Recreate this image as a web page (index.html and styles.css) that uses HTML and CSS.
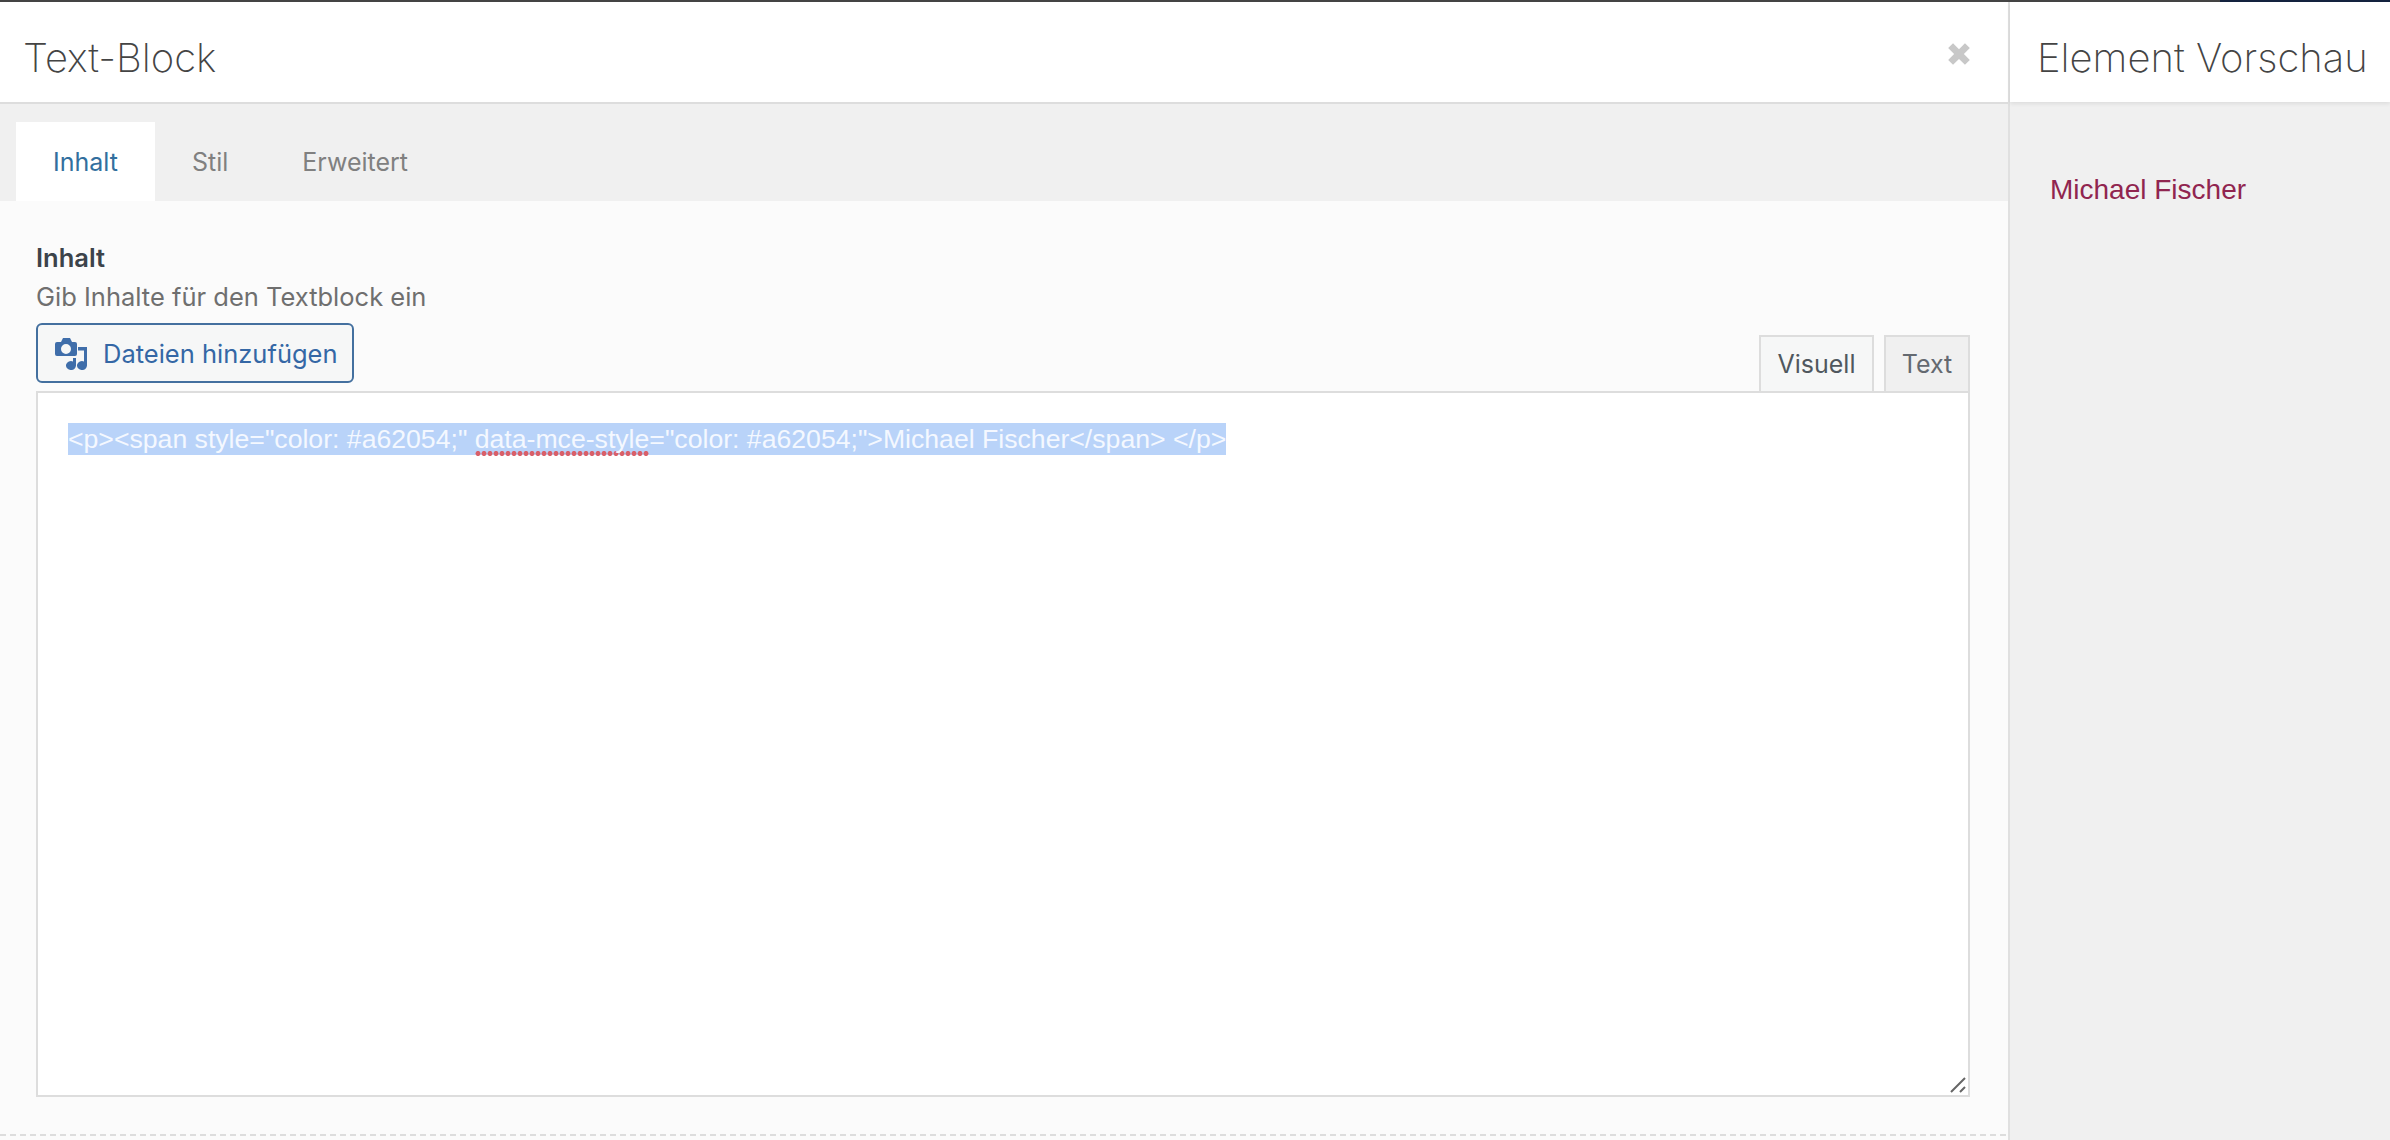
FILE: index.html
```html
<!DOCTYPE html>
<html lang="de">
<head>
<meta charset="utf-8">
<title>Text-Block</title>
<link rel="stylesheet" href="styles.css">
</head>
<body>
<div class="topbar"><div class="topbar-peek"></div></div>
<div class="layout">
  <main class="main">
    <header class="header">
      <h1 class="title">Text-Block</h1>
      <svg class="close" viewBox="0 0 24 24" aria-hidden="true"><path d="M2 6.500 6.500 2 12 7.500 17.500 2 22 6.500 16.500 12 22 17.500 17.500 22 12 16.500 6.500 22 2 17.500 7.500 12Z"/></svg>
    </header>
    <nav class="tabs">
      <a class="tab tab-active">Inhalt</a>
      <a class="tab">Stil</a>
      <a class="tab">Erweitert</a>
    </nav>
    <section class="panel">
      <div class="field-title">Inhalt</div>
      <div class="field-desc">Gib Inhalte für den Textblock ein</div>
      <div class="toolbar">
        <button class="media-btn">
          <svg class="media-icon" viewBox="0 0 34 34" aria-hidden="true">
            <path fill-rule="evenodd" d="M2 6H6L8 2H15L17 6H20Q22 6 22 8V18Q22 20 20 20H2Q0 20 0 18V8Q0 6 2 6ZM11 8A5 5 0 1 0 11 18A5 5 0 1 0 11 8Z"/>
            <path d="M23 11H32V29.500A5 4.500 0 1 1 29 25.400V14.500H23ZM21 22V29.500A5 4.500 0 1 1 18 25.400V22Z"/>
          </svg>
          Dateien hinzufügen
        </button>
        <div class="mode-tabs">
          <span class="mode mode-active">Visuell</span>
          <span class="mode">Text</span>
        </div>
      </div>
      <div class="editor">
        <p class="code"><span class="sel">&lt;p&gt;&lt;span style="color: #a62054;" <span class="spell">data-mce-style</span>="color: #a62054;"&gt;Michael Fischer&lt;/span&gt; &lt;/p&gt;</span></p>
        <svg class="grip" viewBox="0 0 16 16" aria-hidden="true"><path d="M1 15 15 1M10 15 15 10"/></svg>
      </div>
    </section>
  </main>
  <aside class="side">
    <header class="side-header"><h2 class="title">Element Vorschau</h2></header>
    <div class="preview">Michael Fischer</div>
  </aside>
</div>
</body>
</html>
```
FILE: styles.css
```css
* { box-sizing: border-box; }
html, body { margin: 0; height: 1140px; overflow: hidden; background: #f0f0f0; }
body { font-family: Inter, "Liberation Sans", sans-serif; color: #444; }

.topbar { height: 2px; background: #444; display: flex; justify-content: flex-end; }
.topbar-peek { width: 170px; background: #14233f; }

.layout { display: flex; height: 1138px; }
.main { width: 2010px; border-right: 2px solid #e0e0e0; display: flex; flex-direction: column; }

.header { height: 102px; background: #fff; border-bottom: 2px solid #ddd; display: flex; align-items: center; justify-content: space-between; padding: 4px 36px 0 23px; }
.title { margin: 8px 0 0; font-family: Inter, "Liberation Sans", sans-serif; font-weight: 200; font-size: 40px; color: #444; line-height: 48px; }
.close { width: 26px; height: 26px; fill: #c8c8c8; }

.tabs { height: 97px; background: #f0f0f0; padding: 18px 0 0 16px; display: flex; }
.tab { height: 79px; padding: 0 37px; display: flex; align-items: center; justify-content: center; font-size: 25px; color: #808080; }
.tab-active { background: #fff; color: #326f9e; }

.panel { flex: 1; background: #fbfbfb; padding: 43px 38px 0 36px; position: relative; }
.field-title { font-size: 25.500px; font-weight: 600; color: #3c434a; line-height: 28px; }
.field-desc { font-size: 25.500px; color: #6f6f6f; line-height: 28px; margin-top: 11px; }

.toolbar { display: flex; justify-content: space-between; align-items: flex-end; margin-top: 12px; height: 68px; }
.media-btn { height: 60px; width: 318px; align-self: flex-start; border: 2px solid #44709f; border-radius: 6px; background: #f6f7f7; color: #3467a5; font: 25.500px Inter, "Liberation Sans", sans-serif; display: flex; align-items: center; gap: 14px; padding: 0 0 0 17px; }
.media-icon { width: 34px; height: 34px; fill: #3f6eaa; flex: none; }

.mode-tabs { display: flex; gap: 10px; position: relative; top: 2px; }
.mode { height: 58px; width: 86px; justify-content: center; border: 2px solid #ddd; background: #f0f0f0; font-size: 25px; color: #646970; display: flex; align-items: center; }
.mode-active { width: 115px; background: #f6f7f7; color: #50575e; border-bottom-color: #f6f7f7; }

.editor { width: 1934px; height: 706px; background: #fff; border: 2px solid #ddd; padding: 30px 0 0 30px; position: relative; }
.code { margin: 0; font-family: "Liberation Sans", sans-serif; font-size: 26.640px; line-height: 32px; color: #f4f8ff; }
.sel { background: #b9d3f9; padding: 1px 0; }
.spell { padding-bottom: 3px; background: radial-gradient(circle at 3px 2.500px, #d9606a 2.200px, transparent 2.800px) left bottom 1px / 6px 5px repeat-x; }
.grip { position: absolute; right: 2px; bottom: 2px; width: 16px; height: 16px; fill: none; stroke: #666; stroke-width: 2; }

.panel::after { content: ""; position: absolute; left: 0; right: 0; bottom: 4px; height: 2px; background: repeating-linear-gradient(90deg, #ddd 0 6px, transparent 6px 10px); }

.side { flex: 1; display: flex; flex-direction: column; }
.side-header { height: 100px; background: #fff; display: flex; align-items: center; padding: 4px 0 0 27px; box-shadow: 0 2px 4px rgba(0,0,0,.08); }
.preview { margin: 73px 0 0 40px; font-family: "Liberation Sans", sans-serif; font-size: 28px; color: #90254f; line-height: 30px; }
```
